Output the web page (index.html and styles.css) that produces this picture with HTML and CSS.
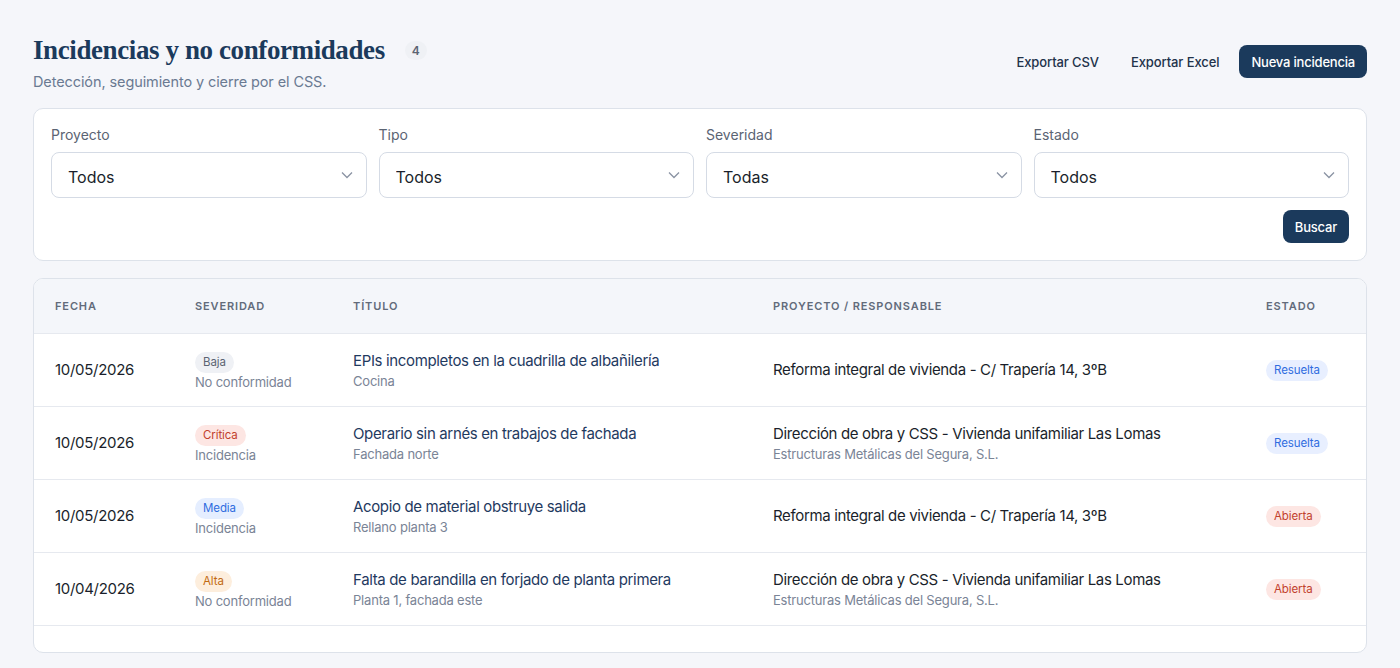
FILE: index.html
```html
<!DOCTYPE html>
<html lang="es">
<head>
  <meta charset="UTF-8">
  <title>Incidencias y no conformidades</title>
  <meta name="viewport" content="width=device-width, initial-scale=1.0">
  <link rel="stylesheet" href="styles.css">
</head>
<body>

<header class="page-head">
  <div>
    <h1>Incidencias y no conformidades <span class="count">4</span></h1>
    <p class="subtitle">Detección, seguimiento y cierre por el CSS.</p>
  </div>
  <div class="actions">
    <button class="btn-ghost">Exportar CSV</button>
    <button class="btn-ghost">Exportar Excel</button>
    <button class="btn-primary">Nueva incidencia</button>
  </div>
</header>

<section class="card filters">
  <div class="filter-grid">
    <label class="field">
      <span>Proyecto</span>
      <select><option>Todos</option></select>
    </label>
    <label class="field">
      <span>Tipo</span>
      <select><option>Todos</option></select>
    </label>
    <label class="field">
      <span>Severidad</span>
      <select><option>Todas</option></select>
    </label>
    <label class="field">
      <span>Estado</span>
      <select><option>Todos</option></select>
    </label>
  </div>
  <div class="filter-foot">
    <button class="btn-primary btn-sm">Buscar</button>
  </div>
</section>

<section class="card table-card">
  <table>
    <colgroup>
      <col style="width:140px">
      <col style="width:158px">
      <col style="width:420px">
      <col style="width:493px">
      <col>
    </colgroup>
    <thead>
      <tr>
        <th>Fecha</th>
        <th>Severidad</th>
        <th>Título</th>
        <th>Proyecto / Responsable</th>
        <th>Estado</th>
      </tr>
    </thead>
    <tbody id="rows"></tbody>
  </table>
  <div class="table-foot"></div>
</section>

<script>
  const incidencias = [
    { fecha: "10/05/2026", sev: "Baja", tipo: "No conformidad", titulo: "EPIs incompletos en la cuadrilla de albañilería", zona: "Cocina",
      proyecto: "Reforma integral de vivienda - C/ Trapería 14, 3ºB", resp: "", estado: "Resuelta" },
    { fecha: "10/05/2026", sev: "Crítica", tipo: "Incidencia", titulo: "Operario sin arnés en trabajos de fachada", zona: "Fachada norte",
      proyecto: "Dirección de obra y CSS - Vivienda unifamiliar Las Lomas", resp: "Estructuras Metálicas del Segura, S.L.", estado: "Resuelta" },
    { fecha: "10/05/2026", sev: "Media", tipo: "Incidencia", titulo: "Acopio de material obstruye salida", zona: "Rellano planta 3",
      proyecto: "Reforma integral de vivienda - C/ Trapería 14, 3ºB", resp: "", estado: "Abierta" },
    { fecha: "10/04/2026", sev: "Alta", tipo: "No conformidad", titulo: "Falta de barandilla en forjado de planta primera", zona: "Planta 1, fachada este",
      proyecto: "Dirección de obra y CSS - Vivienda unifamiliar Las Lomas", resp: "Estructuras Metálicas del Segura, S.L.", estado: "Abierta" }
  ];

  const sevClass = { "Baja": "sev-baja", "Media": "sev-media", "Alta": "sev-alta", "Crítica": "sev-critica" };
  const estadoClass = { "Resuelta": "st-resuelta", "Abierta": "st-abierta" };

  document.getElementById('rows').innerHTML = incidencias.map(i => `
    <tr>
      <td class="date">${i.fecha}</td>
      <td>
        <span class="pill ${sevClass[i.sev]}">${i.sev}</span>
        <div class="muted tight">${i.tipo}</div>
      </td>
      <td>
        <div class="title">${i.titulo}</div>
        <div class="muted">${i.zona}</div>
      </td>
      <td>
        <div class="project">${i.proyecto}</div>
        ${i.resp ? `<div class="muted">${i.resp}</div>` : ""}
      </td>
      <td><span class="pill ${estadoClass[i.estado]}">${i.estado}</span></td>
    </tr>
  `).join("");
</script>
</body>
</html>
```

FILE: styles.css
```css
:root {
  --navy: #1b3a5c;
  --ink: #1a1f2b;
  --muted: #7a8496;
  --line: #dde2ea;
  --bg: #f5f6fa;
}

* {
  box-sizing: border-box;
}

body {
  margin: 0;
  padding: 32px 33px;
  background: var(--bg);
  font-family: Inter, 'Noto Sans', sans-serif;
  color: var(--ink);
}

button, select {
  font-family: inherit;
}

.page-head {
  display: flex;
  justify-content: space-between;
  align-items: flex-start;
  margin-bottom: 18px;
}

h1 {
  margin: 3px 0 0;
  font-family: 'Liberation Serif', 'DejaVu Serif', serif;
  font-size: 27px;
  font-weight: bold;
  letter-spacing: -0.4px;
  color: var(--navy);
  display: flex;
  align-items: center;
}

.count {
  display: inline-block;
  margin-left: 20px;
  padding: 2px 7px;
  border-radius: 999px;
  background: #eff1f5;
  font-family: Inter, sans-serif;
  font-size: 12px;
  font-weight: 600;
  letter-spacing: 0;
  color: #5b6473;
}

.subtitle {
  margin: 7px 0 0;
  font-size: 14.5px;
  letter-spacing: -0.1px;
  color: #6a7a92;
}

.actions {
  display: flex;
  gap: 8px;
  margin-top: 13px;
}

.btn-ghost {
  padding: 8px 12px;
  border: none;
  border-radius: 8px;
  background: transparent;
  font-size: 13px;
  font-weight: 500;
  letter-spacing: -0.1px;
  color: #22324a;
  cursor: pointer;
}

.btn-primary {
  padding: 8px 12px;
  height: 33px;
  border: none;
  border-radius: 8px;
  background: var(--navy);
  font-size: 13px;
  font-weight: 500;
  letter-spacing: -0.2px;
  color: white;
  cursor: pointer;
}

.card {
  background: #fff;
  border: 1px solid var(--line);
  border-radius: 10px;
}

.filters {
  padding: 17px 17px 17px;
  margin-bottom: 17px;
}

.filter-grid {
  display: grid;
  grid-template-columns: repeat(4, 1fr);
  gap: 12px;
}

.field span {
  display: block;
  font-size: 14px;
  color: #5b6473;
  margin: 0 0 9px;
}

.field select {
  width: 100%;
  height: 46px;
  padding: 3px 16px 0;
  border: 1px solid #d5dbe5;
  border-radius: 8px;
  background: #fff url("data:image/svg+xml,%3Csvg xmlns='http://www.w3.org/2000/svg' width='14' height='14' viewBox='0 0 14 14'%3E%3Cpath d='M2 4.5l5 5 5-5' fill='none' stroke='%238a93a3' stroke-width='1.3'/%3E%3C/svg%3E") no-repeat right 12px center;
  appearance: none;
  font-size: 16px;
  color: var(--ink);
}

.filter-foot {
  display: flex;
  justify-content: flex-end;
  margin-top: 12px;
}

.btn-sm {
  padding: 8px 12px;
}

.table-card {
  overflow: hidden;
}

table {
  width: 100%;
  border-collapse: collapse;
  table-layout: fixed;
}

th {
  height: 54px;
  padding: 0 21px;
  background: #f4f6fa;
  text-align: left;
  font-size: 11px;
  font-weight: 600;
  letter-spacing: 0.08em;
  text-transform: uppercase;
  color: #626b7a;
  border-bottom: 1px solid #e6e9ef;
}

td {
  height: 73px;
  padding: 0 21px;
  border-bottom: 1px solid #e6e9ef;
  vertical-align: middle;
}

.date {
  font-size: 15px;
  letter-spacing: -0.3px;
  color: var(--ink);
}

.title {
  font-size: 15px;
  letter-spacing: -0.35px;
  color: #1f3a5f;
}

.project {
  font-size: 15px;
  letter-spacing: -0.35px;
  color: var(--ink);
}

.muted {
  margin-top: 3px;
  font-size: 13px;
  letter-spacing: -0.2px;
  color: var(--muted);
}

.muted.tight {
  margin-top: 1px;
}

.pill {
  display: inline-block;
  padding: 3px 8px;
  border-radius: 999px;
  font-size: 11.5px;
  line-height: 15px;
  letter-spacing: -0.1px;
}

.sev-baja {
  background: #eff1f5;
  color: #5b6473;
}

.sev-critica {
  background: #fde6e3;
  color: #c2412d;
}

.sev-media {
  background: #e5eeff;
  color: #2f6ce0;
}

.sev-alta {
  background: #fdeedd;
  color: #c26a12;
}

.st-resuelta {
  background: #e8efff;
  color: #2f6ce0;
}

.st-abierta {
  background: #fde6e3;
  color: #c2412d;
}

.table-foot {
  height: 26px;
}
```
